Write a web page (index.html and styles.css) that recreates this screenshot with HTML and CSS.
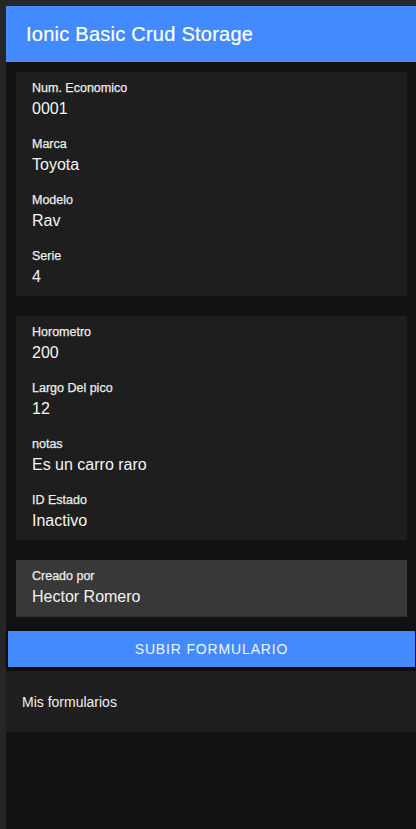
FILE: index.html
```html
<!DOCTYPE html>
<html lang="es">
<head>
<meta charset="utf-8">
<title>Ionic Basic Crud Storage</title>
<link rel="stylesheet" href="styles.css">
</head>
<body>
<div class="app">
  <header class="toolbar">
    <h1 class="title">Ionic Basic Crud Storage</h1>
  </header>
  <main class="content">
    <section class="card">
      <div class="item"><div class="label">Num. Economico</div><div class="value">0001</div></div>
      <div class="item"><div class="label">Marca</div><div class="value">Toyota</div></div>
      <div class="item"><div class="label">Modelo</div><div class="value">Rav</div></div>
      <div class="item"><div class="label">Serie</div><div class="value">4</div></div>
    </section>
    <section class="card">
      <div class="item"><div class="label">Horometro</div><div class="value">200</div></div>
      <div class="item"><div class="label">Largo Del pico</div><div class="value">12</div></div>
      <div class="item"><div class="label">notas</div><div class="value">Es un carro raro</div></div>
      <div class="item"><div class="label">ID Estado</div><div class="value">Inactivo</div></div>
    </section>
    <section class="card card-filled">
      <div class="item"><div class="label">Creado por</div><div class="value">Hector Romero</div></div>
    </section>
    <button class="submit" type="button">SUBIR FORMULARIO</button>
    <div class="list-item">Mis formularios</div>
  </main>
</div>
</body>
</html>
```
FILE: styles.css
```css
html, body {
  margin: 0;
  padding: 0;
  height: 100%;
}
body {
  background: #262626;
  font-family: "Liberation Sans", Arial, sans-serif;
  color: #f2f2f2;
}
.app {
  margin: 6px 0 0 6px;
  height: calc(100% - 6px);
  background: #121212;
  display: flex;
  flex-direction: column;
}
.toolbar {
  height: 56px;
  background: #448aff;
  display: flex;
  align-items: center;
  padding-left: 20px;
  flex: none;
}
.title {
  margin: 0;
  font-size: 20px;
  font-weight: 400;
  color: #ffffff;
  line-height: 24px;
  letter-spacing: 0.25px;
  -webkit-text-stroke: 0.2px #ffffff;
}
.content {
  padding-top: 10px;
  display: flex;
  flex-direction: column;
}
.card {
  background: #1e1e1e;
  margin: 0 9px 20px 10px;
}
.card-filled {
  background: #383838;
  border-bottom: 1px solid #2e2e2e;
  margin-bottom: 14px;
}
.item {
  height: 56px;
  box-sizing: border-box;
  padding: 8px 16px 0;
  border-bottom: 1px solid #212121;
}
.card .item:last-child {
  border-bottom: none;
}
.label {
  font-size: 12.5px;
  line-height: 16px;
  font-weight: 400;
  color: #ececec;
  -webkit-text-stroke: 0.25px #ececec;
}
.value {
  font-size: 16px;
  line-height: 22px;
  margin-top: 2px;
  color: #f4f4f4;
}
.submit {
  margin: 0 1px 0 2px;
  height: 36px;
  border: none;
  background: #448aff;
  color: #eef4ff;
  font-family: "Liberation Sans", Arial, sans-serif;
  font-size: 14px;
  letter-spacing: 0.85px;
  box-shadow: 0 2px 3px rgba(0, 0, 0, 0.6), 0 0 2px rgba(0, 0, 0, 0.5);
  padding: 0;
}
.list-item {
  margin-top: 4px;
  height: 61px;
  background: #1f1f1f;
  display: flex;
  align-items: center;
  padding-left: 16px;
  font-size: 14px;
  color: #f0f0f0;
}
```
